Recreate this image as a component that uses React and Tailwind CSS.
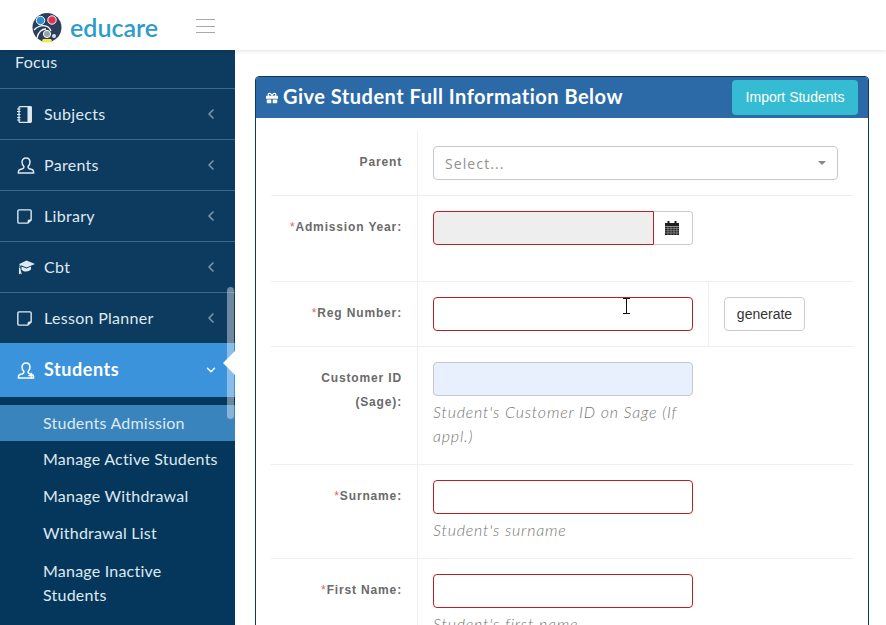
import React from "react";
import { ChevronLeft, ChevronDown } from "lucide-react";
import { FaGift } from "react-icons/fa";

const sans = "font-['Lato','Noto_Sans',sans-serif]";

function UserIcon({ plus = false }) {
  return (
    <svg viewBox="0 0 18 18" className="w-[18px] h-[17px]" fill="none" stroke="currentColor" strokeWidth="1.6">
      <path d="M9 1c-2.6 0-4.2 1.9-4.2 4.4 0 1.9.8 3.5 1.9 4.5v1.3c0 .5-.4.9-1.3 1.2l-2.6.9C1.700 13.700 1 14.300 1 15.500V17h16v-1.500c0-1.200-.7-1.800-1.800-2.200l-2.600-.9c-.9-.3-1.300-.7-1.300-1.200V9.900c1.100-1 1.900-2.600 1.900-4.500C13.200 2.900 11.600 1 9 1z" />
      {plus && <path d="M14.500 11.500v6M11.500 14.500h6" stroke="currentColor" strokeWidth="1.300" />}
    </svg>
  );
}
function NoteIcon() {
  return (
    <svg viewBox="0 0 16 16" className="w-[15px] h-[15px]" fill="none" stroke="currentColor" strokeWidth="1.500">
      <path d="M2.200.9h11.600c.7 0 1.300.6 1.300 1.300v9.400l-3.500 3.500H2.200c-.7 0-1.300-.6-1.300-1.300V2.200c0-.7.6-1.300 1.300-1.300z" />
      <path d="M15 12h-2c-.6 0-1 .4-1 1v2" fill="currentColor" />
    </svg>
  );
}
function BookIcon() {
  return (
    <svg viewBox="0 0 15 17" className="w-[15px] h-[17px]" fill="none" stroke="currentColor">
      <rect x="2" y=".7" width="12.300" height="15.600" rx=".8" strokeWidth="1.300" />
      <rect x="10.500" y="1" width="3.800" height="15" fill="currentColor" stroke="none" />
      <path d="M0 3h3.500M0 5.500h3.500M0 8.500h3.500M0 11.500h3.500M0 14h3.500" strokeWidth="1.100" />
    </svg>
  );
}
function CapIcon() {
  return (
    <svg viewBox="0 0 18 15" className="w-[18px] h-[15px]" fill="currentColor">
      <path d="M9.500 .5 18 4 9.500 7.500 4 5.300 2.800 7l-.6-.3L3 4.800 1.800 4.300z" />
      <path d="M4.500 6.500 9.500 8.500 14 6.600v2.900c-1.200 1.300-3 2-4.800 2-1.700 0-3.500-.5-4.700-1.800z" />
      <path d="M2 7.500h1.200l.9 4.500.8 2.500-1.700-1-1.300 1z" />
    </svg>
  );
}
function CalendarIcon() {
  return (
    <svg viewBox="0 0 14 14" className="w-[14px] h-[14px]" fill="#1f1f1f">
      <rect x="2.500" y="0" width="2" height="3" />
      <rect x="9.500" y="0" width="2" height="3" />
      <path d="M0 2h14v3H0z" />
      <path d="M0 5.600h14V14H0z" />
      <path d="M0 7.500h14M0 9.700h14M0 11.900h14M3 5.600V14M6 5.600V14M9 5.600V14M11.800 5.600V14" stroke="#ffffff" strokeWidth=".6" opacity=".6" />
    </svg>
  );
}

function MenuRow({ icon, label, last = false }) {
  return (
    <div className={`${last ? "h-[50px]" : "h-[51px] border-b border-[#3c6a8c]"} flex items-center pl-[17px] pr-[16px] text-[#dfe9f0]`}>
      <span className="w-[27px] flex items-center">{icon}</span>
      <span className="flex-1 text-[16px] tracking-[0.3px] pb-[1px]">{label}</span>
      <ChevronLeft size={16} strokeWidth={2.4} className="text-[#7d97ad]" />
    </div>
  );
}

function Label({ req, children }) {
  return (
    <div className="w-[147px] shrink-0 border-r border-[#eeeeee] pt-[19px] pr-[15px] text-right font-['Liberation_Sans',sans-serif] font-bold text-[12px] leading-[24px] tracking-[0.85px] text-[#6a6a6a]">
      {req && <span className="text-[#d9646a] font-normal">*</span>}
      {children}
    </div>
  );
}

function Help({ children }) {
  return <p className={`${sans} italic font-light text-[16px] leading-[24px] tracking-[0.8px] text-[#777777] mt-[4px] w-[260px]`}>{children}</p>;
}

const redInput = "block w-[260px] h-[34px] rounded-[4px] border border-[#b92025] bg-white";

export default function App() {
  return (
    <div className={`${sans} w-[886px] h-[625px] overflow-hidden flex flex-col bg-white`}>
      <header className="h-[50px] shrink-0 bg-white flex items-center relative z-10 shadow-[0_1px_4px_rgba(0,0,0,0.12)]">
        <svg viewBox="0 0 30 30" className="ml-[32px] mt-[6px] w-[30px] h-[30px] shrink-0">
          <circle cx="15" cy="14.500" r="14.500" fill="#2b3f5c" />
          <path d="M2 17c6-6 14-6 17 1" stroke="#fff" strokeWidth="1.300" fill="none" />
          <path d="M5 25c1-6 5-9 9-9" stroke="#fff" strokeWidth="1.300" fill="none" />
          <circle cx="8.500" cy="7.500" r="4.200" fill="#2b8fd3" stroke="#fff" />
          <circle cx="20" cy="7" r="4.200" fill="#d9344d" stroke="#fff" />
          <circle cx="15" cy="21" r="3.600" fill="#9aa3ad" stroke="#fff" />
          <path d="M10 28c3 2 7 2 10 0l-1-2h-8z" fill="#f2ea45" />
          <circle cx="22" cy="23" r="2" fill="#dfe3e8" />
        </svg>
        <span className="ml-[8px] mt-[4px] w-[92px] text-[25px] leading-none font-semibold text-[#2b9ccb]">educare</span>
        <div className="ml-[34px] mt-[2px] w-[19px] flex flex-col gap-[5.5px]">
          <span className="h-[1px] bg-[#a9a9a9]" />
          <span className="h-[1px] bg-[#a9a9a9]" />
          <span className="h-[1px] bg-[#a9a9a9]" />
        </div>
      </header>

      <div className="flex flex-1 min-h-0">
        <aside className="w-[235px] shrink-0 bg-[#0d3a5f] relative overflow-hidden">
          <div className="h-[39px] border-b border-[#3c6a8c] pl-[15px] text-[16px] leading-[24px] tracking-[0.3px] text-[#dfe9f0]">Focus</div>
          <MenuRow icon={<BookIcon />} label="Subjects" />
          <MenuRow icon={<UserIcon />} label="Parents" />
          <MenuRow icon={<NoteIcon />} label="Library" />
          <MenuRow icon={<CapIcon />} label="Cbt" />
          <MenuRow icon={<NoteIcon />} label="Lesson Planner" last />
          <div className="h-[54px] bg-[#3b93dc] flex items-center pl-[17px] pr-[17px] text-white">
            <span className="w-[27px] flex items-center"><UserIcon plus /></span>
            <span className="flex-1 font-bold text-[18px] tracking-[0.55px] pb-[1px]">Students</span>
            <ChevronDown size={14} strokeWidth={2.4} />
          </div>
          <div className="bg-[#05375c] pt-[8px] pb-[40px] text-[16px] tracking-[0.22px] text-[#dfe9f0]">
            <div className="h-[36px] leading-[35px] pl-[43px] bg-[#3a84bd]">Students Admission</div>
            <div className="h-[37px] leading-[36px] pl-[43px]">Manage Active Students</div>
            <div className="h-[37px] leading-[36px] pl-[43px]">Manage Withdrawal</div>
            <div className="h-[37px] leading-[36px] pl-[43px]">Withdrawal List</div>
            <div className="pt-[7px] pl-[43px] pr-[30px] leading-[24px]">Manage Inactive Students</div>
          </div>
          <div className="absolute left-[227px] top-[237px] w-[7px] h-[132px] rounded-full bg-white/40" />
          <div className="absolute left-[223px] top-[301px] w-0 h-0 border-y-[12px] border-y-transparent border-r-[12px] border-r-white" />
        </aside>

        <main className="flex-1 min-w-0 bg-white pt-[26px] pl-[20px] pr-[17px] overflow-hidden">
          <section className="border border-[#0d3a5f] rounded-[4px] overflow-hidden">
            <div className="h-[41px] bg-[#2c6aa7] flex items-center pl-[10px] pr-[10px]">
              <FaGift size={12} className="text-white mr-[5px]" />
              <h1 className="flex-1 text-white font-bold text-[20px] tracking-[0.5px] pb-[3px]">Give Student Full Information Below</h1>
              <button className="w-[126px] h-[35px] rounded-[4px] bg-[#35bcd2] text-white text-[14px] font-['Liberation_Sans',sans-serif]">Import Students</button>
            </div>
            <div className="pt-[13px] pl-[15px] pr-[15px] h-[600px]">
              <div className="flex h-[65px] border-b border-[#eeeeee]">
                <Label>Parent</Label>
                <div className="pl-[15px] pt-[15px]">
                  <div className="w-[405px] h-[34px] rounded-[4px] border border-[#c6c8cc] bg-white flex items-center px-[11px] font-['Open_Sans',sans-serif] text-[14px] tracking-[1.1px] text-[#8f8f8f]">
                    <span className="flex-1">Select...</span>
                    <span className="w-0 h-0 border-x-[4px] border-x-transparent border-t-[4px] border-t-[#888888]" />
                  </div>
                </div>
              </div>
              <div className="flex h-[86px] border-b border-[#eeeeee]">
                <Label req>Admission Year:</Label>
                <div className="pl-[15px] pt-[15px]">
                  <div className="flex w-[260px] h-[34px]">
                    <div className="w-[221px] rounded-l-[4px] border border-[#b92025] bg-[#eeeeee]" />
                    <div className="w-[39px] rounded-r-[4px] border border-l-0 border-[#cccccc] bg-white flex items-center justify-center pr-[2px]">
                      <CalendarIcon />
                    </div>
                  </div>
                </div>
              </div>
              <div className="flex h-[65px] border-b border-[#eeeeee]">
                <Label req>Reg Number:</Label>
                <div className="pl-[15px] pr-[15px] pt-[15px] border-r border-[#eeeeee] relative">
                  <div className={redInput} />
                  <svg viewBox="0 0 9 16" className="absolute left-[204px] top-[16px] w-[9px] h-[16px]" fill="none" stroke="#111111" strokeWidth="1">
                    <path d="M1 .5h7M4.500 .5v15M1 15.500h7" />
                  </svg>
                </div>
                <div className="pl-[15px] pt-[15px]">
                  <button className="w-[81px] h-[34px] rounded-[4px] border border-[#cccccc] bg-white text-[14px] text-[#333333] font-['Liberation_Sans',sans-serif]">generate</button>
                </div>
              </div>
              <div className="flex h-[118px] border-b border-[#eeeeee]">
                <Label>Customer ID (Sage):</Label>
                <div className="pl-[15px] pt-[15px]">
                  <div className="w-[260px] h-[34px] rounded-[4px] border border-[#c6c8cc] bg-[#e8f0fe]" />
                  <Help>Student's Customer ID on Sage (If appl.)</Help>
                </div>
              </div>
              <div className="flex h-[94px] border-b border-[#eeeeee]">
                <Label req>Surname:</Label>
                <div className="pl-[15px] pt-[15px]">
                  <div className={redInput} />
                  <Help>Student's surname</Help>
                </div>
              </div>
              <div className="flex h-[94px]">
                <Label req>First Name:</Label>
                <div className="pl-[15px] pt-[15px]">
                  <div className={redInput} />
                  <Help>Student's first name</Help>
                </div>
              </div>
            </div>
          </section>
        </main>
      </div>
    </div>
  );
}
